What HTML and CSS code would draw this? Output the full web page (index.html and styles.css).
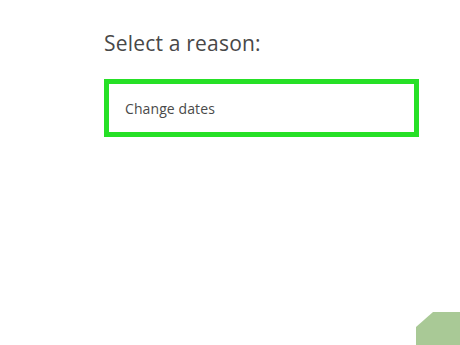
FILE: index.html
```html
<!DOCTYPE html>
<html lang="en">
<head>
  <meta charset="UTF-8" />
  <title>Select a reason</title>
  <link rel="stylesheet" href="styles.css">
</head>
<body>
  <div class="page">
    <h2 class="title">Select a reason:</h2>
    <div class="option">Change dates</div>
  </div>
  <div class="corner"></div>
</body>
</html>
```

FILE: styles.css
```css
html, body {
  margin: 0;
  height: 100%;
}
body {
  font-family: "Open Sans", sans-serif;
  background: #fff;
  overflow: hidden;
  position: relative;
}
.page {
  padding: 28px 0 0 104px;
  width: 315px;
}
.title {
  margin: 0;
  font-size: 21px;
  font-weight: 400;
  color: #484848;
  line-height: 30px;
  letter-spacing: 0.2px;
}
.option {
  margin-top: 21px;
  height: 48px;
  border: 5px solid #26e026;
  padding: 0 0 0 16px;
  display: flex;
  align-items: center;
  font-size: 14px;
  color: #4a4a4a;
  letter-spacing: 0.1px;
}
.corner {
  position: absolute;
  right: 0;
  bottom: 0;
  width: 44px;
  height: 33px;
  background: #a9c996;
  clip-path: polygon(17px 0, 100% 0, 100% 100%, 0 100%, 0 15px);
}
```
